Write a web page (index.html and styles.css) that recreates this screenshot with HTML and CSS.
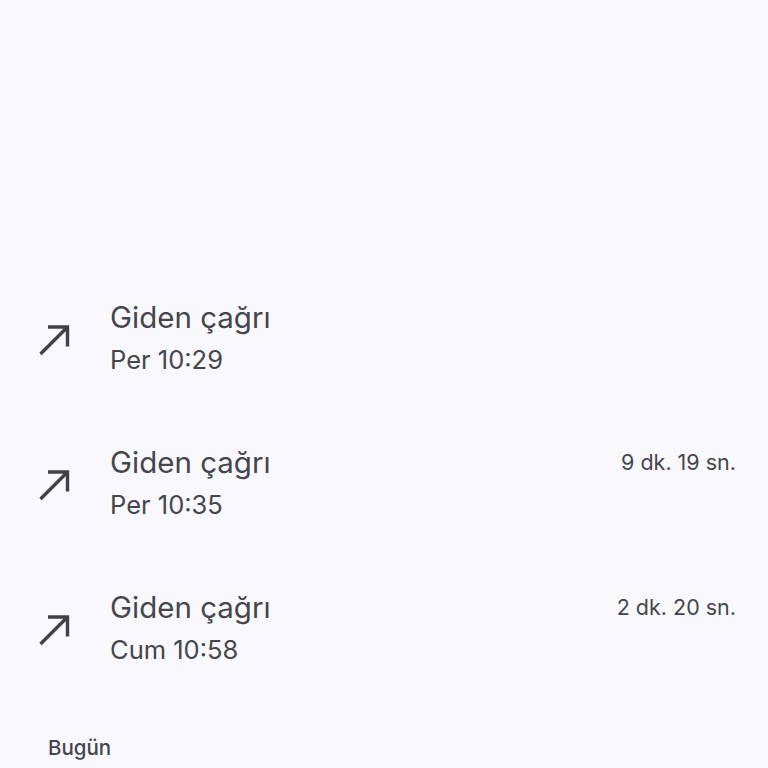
FILE: index.html
```html
<!DOCTYPE html>
<html lang="tr">
<head>
<meta charset="utf-8">
<link rel="stylesheet" href="styles.css">
</head>
<body>
<div class="screen">
  <div class="spacer"></div>
  <ul class="calls">
    <li class="call">
      <svg class="icon" viewBox="0 0 32 32" width="32" height="32"><path d="M2.5 30 L29.5 3 M10 3 H29.5 V22.5" fill="none" stroke="#404148" stroke-width="3.4"/></svg>
      <div class="info">
        <div class="title">Giden çağrı</div>
        <div class="time">Per 10:29</div>
      </div>
      <div class="dur"></div>
    </li>
    <li class="call">
      <svg class="icon" viewBox="0 0 32 32" width="32" height="32"><path d="M2.5 30 L29.5 3 M10 3 H29.5 V22.5" fill="none" stroke="#404148" stroke-width="3.4"/></svg>
      <div class="info">
        <div class="title">Giden çağrı</div>
        <div class="time">Per 10:35</div>
      </div>
      <div class="dur">9 dk. 19 sn.</div>
    </li>
    <li class="call">
      <svg class="icon" viewBox="0 0 32 32" width="32" height="32"><path d="M2.5 30 L29.5 3 M10 3 H29.5 V22.5" fill="none" stroke="#404148" stroke-width="3.4"/></svg>
      <div class="info">
        <div class="title">Giden çağrı</div>
        <div class="time">Cum 10:58</div>
      </div>
      <div class="dur">2 dk. 20 sn.</div>
    </li>
  </ul>
  <div class="section">Bugün</div>
</div>
</body>
</html>
```
FILE: styles.css
```css
html, body {
  margin: 0;
  padding: 0;
  background: #f9f8fd;
}
.screen {
  width: 768px;
  height: 768px;
  overflow: hidden;
  font-family: Inter, Roboto, "Noto Sans", sans-serif;
  color: #45464c;
}
.spacer {
  height: 267px;
}
.calls {
  list-style: none;
  margin: 0;
  padding: 0;
}
.call {
  height: 145px;
  display: flex;
  align-items: center;
  padding: 0 32px 0 38px;
  box-sizing: border-box;
}
.icon {
  width: 32px;
  height: 32px;
  flex: none;
  margin-right: 40px;
}
.info {
  flex: 1;
}
.title {
  font-size: 29.5px;
  line-height: 40px;
  color: #45464c;
}
.time {
  font-size: 25.5px;
  line-height: 46px;
  color: #45464c;
}
.dur {
  align-self: center;
  font-size: 21.5px;
  margin-top: -46px;
  color: #45464c;
}
.section {
  padding: 33px 0 0 48px;
  font-size: 20.5px;
  font-weight: 500;
  color: #45464c;
}
```
